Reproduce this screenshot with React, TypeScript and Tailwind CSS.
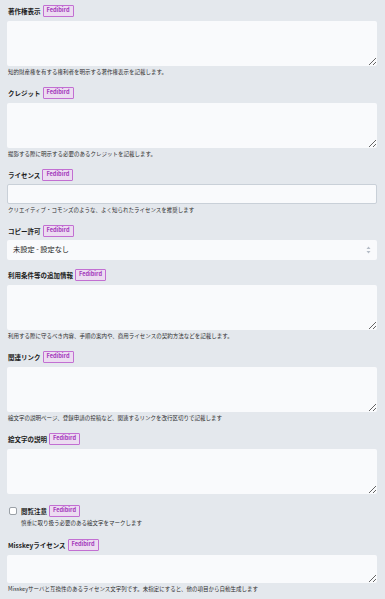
const font = {
  fontFamily: '"Noto Sans CJK JP", "Noto Sans", sans-serif',
};

function Badge() {
  return (
    <span className="ml-[2px] inline-flex h-[12px] items-center rounded-[1px] border border-[#c26fd2] bg-[#ecdcf1] px-[3px] text-[5.6px] font-bold leading-none text-[#a338bb]">
      Fedibird
    </span>
  );
}

function Label({ text }: { text: string }) {
  return (
    <div className="flex h-[12px] items-center pl-[1px]">
      <span className="text-[6.5px] font-bold leading-none text-[#1c1c1c]">{text}</span>
      <Badge />
    </div>
  );
}

function Hint({ text }: { text: string }) {
  return <p className="h-[12px] pl-[1px] text-[5.5px] leading-[12px] text-[#2e2e2e]">{text}</p>;
}

function Area({ h = "h-[45px]" }: { h?: string }) {
  return (
    <textarea
      className={`mt-[4px] block w-full ${h} resize-y rounded-[2px] bg-[#f9fafc] outline-none`}
    />
  );
}

const textSections = [
  { label: "著作権表示", hint: "知的財産権を有する権利者を明示する著作権表示を記載します。" },
  { label: "クレジット", hint: "撮影する際に明示する必要のあるクレジットを記載します。" },
];

const moreSections = [
  { label: "利用条件等の追加情報", hint: "利用する際に守るべき内容、手順の案内や、商用ライセンスの契約方法などを記載します。" },
  { label: "関連リンク", hint: "絵文字の説明ページ、登録申請の投稿など、関連するリンクを改行区切りで記載します" },
  { label: "絵文字の説明", hint: "" },
];

export default function App() {
  return (
    <div className="min-h-[599px] bg-[#e4e8ed] pl-[7px] pr-[8px] pt-[5px]" style={font}>
      {textSections.map((s) => (
        <section key={s.label} className="mb-[9px]">
          <Label text={s.label} />
          <Area />
          <Hint text={s.hint} />
        </section>
      ))}

      <section className="mb-[9px]">
        <Label text="ライセンス" />
        <input
          type="text"
          className="mt-[3px] block h-[20px] w-full rounded-[2px] border border-[#c9d0d8] bg-[#f9fafc] outline-none"
        />
        <Hint text="クリエイティブ・コモンズのような、よく知られたライセンスを推奨します" />
      </section>

      <section className="mb-[9px]">
        <Label text="コピー許可" />
        <div className="mt-[3px] flex h-[20px] w-full items-center justify-between rounded-[2px] bg-[#f9fafc] pl-[6px] pr-[6px]">
          <span className="text-[7.2px] leading-none text-[#1c1c1c]">未設定 - 設定なし</span>
          <svg width="5" height="8" viewBox="0 0 5 8">
            <path d="M2.5 0.5 L4.5 3 L0.5 3 Z" fill="#b4bcc6" />
            <path d="M2.5 7.5 L4.5 5 L0.5 5 Z" fill="#b4bcc6" />
          </svg>
        </div>
      </section>

      {moreSections.map((s) => (
        <section key={s.label} className={s.hint ? "mb-[9px]" : ""}>
          <Label text={s.label} />
          <Area />
          <Hint text={s.hint} />
        </section>
      ))}

      <section className="mb-[10px] -mt-[1px]">
        <div className="flex h-[12px] items-center pl-[2px]">
          <span className="h-[8px] w-[8px] rounded-[2px] border border-[#9aa0a6] bg-white" />
          <span className="ml-[4px] text-[6.5px] font-bold leading-none text-[#1c1c1c]">閲覧注意</span>
          <Badge />
        </div>
        <p className="h-[12px] pl-[14px] text-[5.5px] leading-[12px] text-[#2e2e2e]">
          慎重に取り扱う必要のある絵文字をマークします
        </p>
      </section>

      <section>
        <Label text="Misskeyライセンス" />
        <Area h="h-[28px]" />
        <Hint text="Misskeyサーバと互換性のあるライセンス文字列です。未指定にすると、他の項目から自動生成します" />
      </section>
    </div>
  );
}
